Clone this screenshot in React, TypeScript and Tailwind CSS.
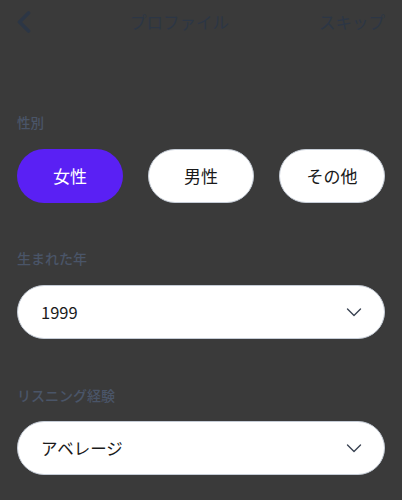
import React from "react";

const font = { fontFamily: '"Noto Sans CJK JP", "Noto Sans", sans-serif' };

function Chevron() {
  return (
    <svg width="16" height="9" viewBox="0 0 16 9" fill="none">
      <path d="M1.5 1 L8 7.5 L14.5 1" stroke="#3a4352" strokeWidth="1.4" strokeLinecap="round" strokeLinejoin="round" />
    </svg>
  );
}

function Select({ value }: { value: string }) {
  return (
    <div className="flex items-center justify-between h-[54px] rounded-full bg-white border border-[#c5ccd6] pl-[23px] pr-[22px]">
      <span className="text-[16.5px] text-[#1a1a1a]">{value}</span>
      <Chevron />
    </div>
  );
}

export default function App() {
  return (
    <div className="w-[402px] h-[500px] bg-[#3a3a3a] overflow-hidden" style={font}>
      <div className="flex items-center h-[44px] pl-[17px] pr-[17px]">
        <svg width="14" height="22" viewBox="0 0 14 22" fill="none">
          <path d="M11.5 2 L2.5 11 L11.5 20" stroke="#2c3645" strokeWidth="3.6" strokeLinecap="round" strokeLinejoin="round" />
        </svg>
        <span className="text-[16.5px] text-[#2c3645] ml-[99px]">プロファイル</span>
        <span className="text-[16.5px] text-[#2c3645] ml-auto">スキップ</span>
      </div>

      <div className="px-[17px] mt-[68px]">
        <div className="text-[13.5px] leading-[20px] font-medium text-[#4a5568]">性別</div>
        <div className="flex justify-between mt-[17px]">
          <div className="w-[106px] h-[54px] rounded-full bg-[#5a20f4] flex items-center justify-center text-white text-[17px]">女性</div>
          <div className="w-[106px] h-[54px] rounded-full bg-white border border-[#c5ccd6] flex items-center justify-center text-[#1a1a1a] text-[17px]">男性</div>
          <div className="w-[106px] h-[54px] rounded-full bg-white border border-[#c5ccd6] flex items-center justify-center text-[#1a1a1a] text-[17px]">その他</div>
        </div>

        <div className="text-[14px] leading-[20px] font-medium text-[#4a5568] mt-[45px]">生まれた年</div>
        <div className="mt-[17px]">
          <Select value="1999" />
        </div>

        <div className="text-[14px] leading-[20px] font-medium text-[#4a5568] mt-[46px]">リスニング経験</div>
        <div className="mt-[16px]">
          <Select value="アベレージ" />
        </div>
      </div>
    </div>
  );
}
